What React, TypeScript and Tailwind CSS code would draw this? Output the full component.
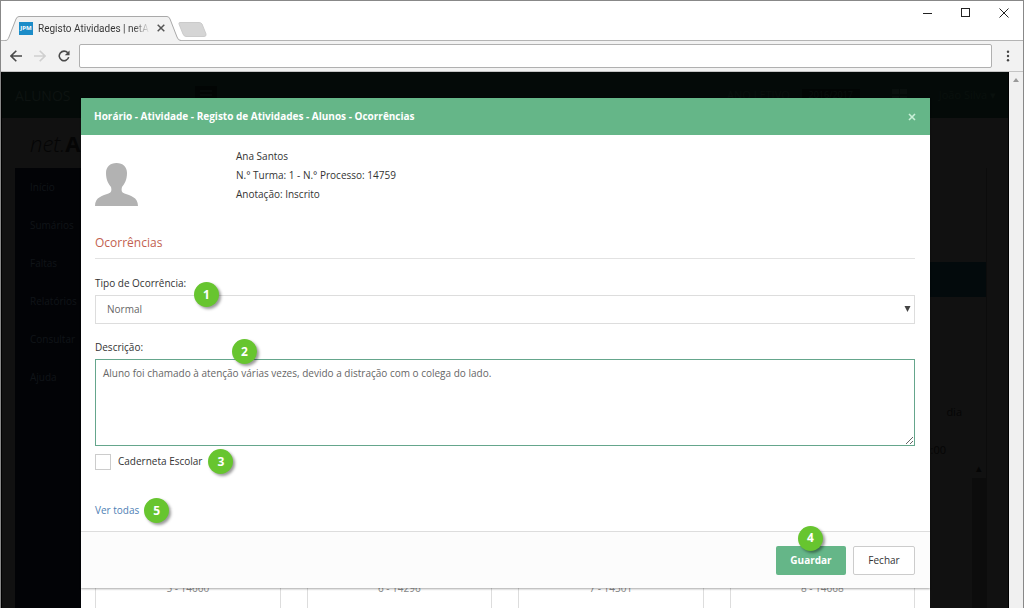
import type { ReactNode } from "react";

const menu = ["Início", "Sumários", "Faltas", "Relatórios", "Consultar", "Ajuda"];
const students = ["5 - 14660", "6 - 14296", "7 - 14301", "8 - 14668"];

function Badge({ n, className = "" }: { n: number; className?: string }) {
  return (
    <span
      className={`flex size-[25px] items-center justify-center rounded-full bg-[#67c52f] text-[12px] font-bold text-white shadow-[2px_2px_3px_rgba(0,0,0,0.4)] ${className}`}
    >
      {n}
    </span>
  );
}

function IconButton({ label, children }: { label: string; children: ReactNode }) {
  return (
    <button type="button" aria-label={label} className="flex items-center justify-center">
      {children}
    </button>
  );
}

function TitleBar() {
  return (
    <div className="flex h-10 shrink-0 items-start justify-between border-b border-[#b4b4b4] bg-white">
      <div className="flex self-end">
        <div className="relative -mb-px ml-1 flex h-[26px] w-[176px] items-center gap-[5px] pl-[14px]">
          <svg className="absolute inset-0" width="176" height="26" viewBox="0 0 176 26" aria-hidden="true">
            <path d="M0 25.5 C3 25.5 3 24 4 22 L11 4 Q12 1.500 14 1.500 H162 Q164 1.500 165 4 L172 22 Q173 25.500 176 25.500 V26 H0Z" fill="#f2f2f2" />
            <path d="M0 25.500 C3 25.500 3 24 4 22 L11 4 Q12 1.500 14 1.500 H162 Q164 1.500 165 4 L172 22 Q173 25.500 176 25.500" fill="none" stroke="#a9a9a9" />
          </svg>
          <span className="relative flex h-[13px] w-[14px] items-center justify-center bg-[#1c8cc8] text-[6px] font-bold text-white">
            JPM
          </span>
          <span className="relative w-[112px] bg-gradient-to-r from-[#333] from-85% to-transparent bg-clip-text font-[Roboto,sans-serif] text-[10px] whitespace-nowrap text-transparent">
            Registo Atividades | netA
          </span>
          <span className="relative ml-0.5 flex">
            <IconButton label="Fechar separador">
              <svg width="8" height="8" viewBox="0 0 8 8" stroke="#555" strokeWidth="1.500">
                <path d="M.7.7l6.600 6.600M7.300.7L.7 7.300" />
              </svg>
            </IconButton>
          </span>
        </div>
        <button type="button" aria-label="Novo separador" className="mt-[7px] -ml-[3px] self-start">
          <svg width="29" height="15" viewBox="0 0 29 15">
            <path d="M2 .5H21Q23 .5 24 2L28 12Q28.500 14.500 26 14.500H8Q6 14.500 5 12L1 2Q.5.5 2 .5Z" fill="#d5d5d5" stroke="#cbcbcb" />
          </svg>
        </button>
      </div>
      <div className="flex items-center gap-7 pt-[7px] pr-[14px]">
        <IconButton label="Minimizar">
          <svg width="10" height="10" stroke="#222" fill="none"><path d="M0 5.500H9" /></svg>
        </IconButton>
        <IconButton label="Maximizar">
          <svg width="10" height="10" stroke="#222" fill="none"><rect x=".5" y=".5" width="8" height="8" /></svg>
        </IconButton>
        <IconButton label="Fechar janela">
          <svg width="10" height="10" stroke="#222" fill="none"><path d="M.5.5l9 9M9.500.5l-9 9" /></svg>
        </IconButton>
      </div>
    </div>
  );
}

function Toolbar() {
  return (
    <div className="flex h-[31px] shrink-0 items-center border-b border-[#c4c4c4] bg-[#f2f2f2] pr-[13px] pl-[9px]">
      <div className="flex w-[69px] items-center gap-3">
        <IconButton label="Recuar">
          <svg width="12" height="12" viewBox="0 0 12 12" fill="none" stroke="#4a4a4a" strokeWidth="1.600">
            <path d="M12 6H1M6.300.7L1 6l5.300 5.300" />
          </svg>
        </IconButton>
        <IconButton label="Avançar">
          <svg width="12" height="12" viewBox="0 0 12 12" fill="none" stroke="#cfcfcf" strokeWidth="1.600">
            <path d="M0 6h11M5.700.7L11 6l-5.300 5.300" />
          </svg>
        </IconButton>
        <IconButton label="Atualizar">
          <svg width="12" height="12" viewBox="0 0 13 13" fill="none" stroke="#4a4a4a" strokeWidth="1.700">
            <path d="M10.600 3.100A5.200 5.200 0 1 0 11.600 7.700" />
            <path d="M12.500.5V5.700H7.300Z" fill="#4a4a4a" stroke="none" />
          </svg>
        </IconButton>
      </div>
      <input
        aria-label="Endereço"
        className="h-6 min-w-0 flex-1 rounded-xs border border-[#b0b0b0] bg-white px-2 text-[11px] outline-none"
      />
      <span className="ml-[14px] flex">
        <IconButton label="Menu">
          <svg width="4" height="12" viewBox="0 0 4 12" fill="#444">
            <circle cx="2" cy="1.800" r="1.200" />
            <circle cx="2" cy="6" r="1.200" />
            <circle cx="2" cy="10.200" r="1.200" />
          </svg>
        </IconButton>
      </span>
    </div>
  );
}

function DimmedPage() {
  return (
    <div className="h-full border-x border-black bg-[#111] text-[11px] text-[#15191b]">
      <header className="flex h-[46px] items-center bg-[#040a08] pl-[13px] text-[#0d1311]">
        <span className="w-[180px] text-[14px]">ALUNOS</span>
        <svg width="22" height="18" fill="#020504"><rect width="22" height="18" /><path d="M5 5h12M5 9h12M5 13h12" stroke="#0a100e" /></svg>
        <div className="ml-auto flex items-center pr-3 text-[#09100d]">
          <span>ANO LETIVO</span>
          <span className="ml-3 h-3 w-[58px] bg-[#020504] text-center text-[9px] leading-3">2016/2017</span>
          <svg className="mr-8 ml-8" width="15" height="12" fill="#090f0d"><path d="M0 0h7v5H0zM8 0h7v5H8zM0 7h7v5H0zM8 7h7v5H8z" /></svg>
          <span>João Silva ▾</span>
        </div>
      </header>
      <div className="flex h-[50px] items-center pl-7 text-[22px] text-[#050505]">
        <em className="font-light">net.</em>
        <b>Alunos</b>
      </div>
      <div className="flex h-full">
        <nav className="ml-[13px] w-[185px] bg-[#020306] pl-[15px] text-[10px] text-[#101418]">
          {menu.map((item) => (
            <a key={item} href="#" className="block h-[38px] leading-[38px]">
              {item}
            </a>
          ))}
        </nav>
        <div className="mr-[21px] flex-1 border-r border-[#0c0c0c] pt-[94px] text-right text-[#050505]">
          <div className="h-[35px] bg-[#030a0c]" />
          <p className="mt-[107px] mr-6">dia</p>
          <p className="mt-[21px] mr-10">09:00</p>
          <p className="mr-1 leading-5">▴</p>
          <div className="ml-auto h-40 w-[14px] bg-[#0c0c0c]" />
        </div>
      </div>
    </div>
  );
}

function OccurrenceDialog() {
  return (
    <section role="dialog" aria-labelledby="dialog-title" className="relative z-10 bg-white shadow-[0_1px_2px_rgba(0,0,0,0.35)]">
      <header className="flex h-[37px] items-center justify-between bg-[#65b688] pr-[14px] pl-[13px] text-white">
        <h1 id="dialog-title" className="font-bold">
          Horário - Atividade - Registo de Atividades - Alunos - Ocorrências
        </h1>
        <IconButton label="Fechar diálogo">
          <svg width="8" height="8" viewBox="0 0 8 8" stroke="#c9f0d8" strokeWidth="1.600"><path d="M1 1l6 6M7 1L1 7" /></svg>
        </IconButton>
      </header>
      <div className="pt-3 pr-[15px] pb-3 pl-[14px]">
        <div className="flex h-[81px]">
          <svg className="mt-4 mr-[98px]" width="43" height="43" viewBox="0 0 43 43" fill="#b2b2b2" role="img" aria-label="Fotografia">
            <path d="M21.500 0C28 0 32 4 32 10C32 17 29.500 21 27 24C26 28 27 29.500 29.500 30.500C35 32.500 43 34 43 43H0C0 34 8 32.500 13.500 30.500C16 29.500 17 28 16 24C13.500 21 11 17 11 10C11 4 15 0 21.500 0Z" />
          </svg>
          <div className="leading-[19px] font-medium">
            <p>Ana Santos</p>
            <p>N.° Turma: 1 - N.° Processo: 14759</p>
            <p>Anotação: Inscrito</p>
          </div>
        </div>
        <h2 className="flex h-[31px] items-center border-b border-[#e2e2e2] text-[12px] font-medium text-[#c25f50]">Ocorrências</h2>
        <div className="relative pt-4">
          <label htmlFor="tipo" className="block h-5 leading-[17px] font-medium">Tipo de Ocorrência:</label>
          <div className="relative">
            <select id="tipo" className="block h-[29px] w-full appearance-none border border-[#ddd] bg-white pl-[11px] text-[#666] outline-none">
              <option>Normal</option>
            </select>
            <svg className="pointer-events-none absolute top-[11px] right-1" width="7" height="6" fill="#444"><path d="M.5 0h6l-3 6z" /></svg>
          </div>
          <Badge n={1} className="absolute top-[23px] left-[99px]" />
        </div>
        <div className="relative pt-[15px]">
          <label htmlFor="descricao" className="block h-5 leading-[17px] font-medium">Descrição:</label>
          <textarea
            id="descricao"
            className="block h-[87px] w-full resize border border-[#65a68c] px-[7px] py-[5px] leading-[17px] text-[#666] outline-none"
            defaultValue="Aluno foi chamado à atenção várias vezes, devido a distração com o colega do lado."
          />
          <Badge n={2} className="absolute top-[15px] left-[137px]" />
        </div>
        <div className="mt-[3px] flex items-center gap-[7px]">
          <input id="caderneta" type="checkbox" className="size-4 appearance-none border border-[#ccc] bg-white" />
          <label htmlFor="caderneta">Caderneta Escolar</label>
          <Badge n={3} className="-ml-px" />
        </div>
        <div className="mt-6 -mb-1 flex items-center gap-[5px]">
          <a href="#" className="text-[#4f7fb5]">Ver todas</a>
          <Badge n={5} />
        </div>
      </div>
      <footer className="flex h-[57px] items-center justify-end gap-[7px] border-t border-[#ddd] bg-[#fcfcfc] pr-[15px] pl-[14px]">
        <div className="relative">
          <button type="button" className="h-[29px] w-[70px] rounded-xs bg-[#65b688] font-bold text-white">Guardar</button>
          <Badge n={4} className="absolute -top-5 left-[22px]" />
        </div>
        <button type="button" className="h-[29px] w-[62px] rounded-xs border border-[#ccc] bg-white font-medium">Fechar</button>
      </footer>
    </section>
  );
}

function StudentCards() {
  return (
    <div className="grid flex-1 grid-cols-4 gap-[26px] bg-white pr-[15px] pl-[14px]">
      {students.map((s) => (
        <div key={s} className="border-x border-[#ddd]">
          <p className="-mt-1.5 text-center leading-3 text-[#888]">{s}</p>
        </div>
      ))}
    </div>
  );
}

export default function App() {
  return (
    <div className="flex h-screen flex-col overflow-hidden border border-b-0 border-[#888] bg-white font-['Open_Sans','Noto_Sans',sans-serif] text-[10px] text-[#333]">
      <TitleBar />
      <Toolbar />
      <div className="flex min-h-0 flex-1">
        <main className="relative min-w-0 flex-1 overflow-hidden">
          <DimmedPage />
          <div className="absolute inset-0 flex flex-col pt-[26px] pr-[79px] pl-20">
            <OccurrenceDialog />
            <StudentCards />
          </div>
        </main>
        <div className="flex w-[14px] shrink-0 justify-center bg-[#f0f0f0] pt-[6px]">
          <svg width="6" height="4" fill="#999"><path d="M0 4l3-4 3 4z" /></svg>
        </div>
      </div>
    </div>
  );
}
